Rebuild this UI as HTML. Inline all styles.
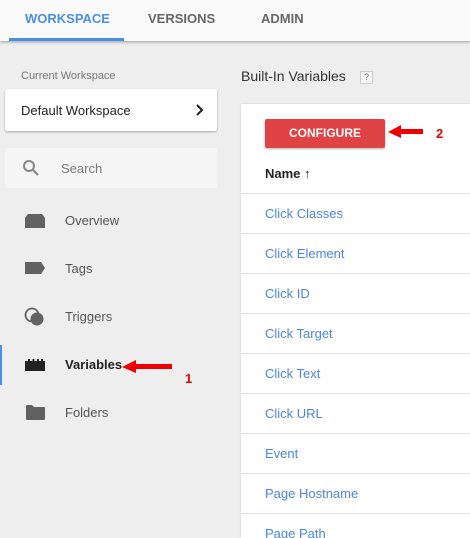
<!DOCTYPE html>
<html><head><style>
*{margin:0;padding:0;box-sizing:border-box}
html,body{width:470px;height:538px;overflow:hidden}
body{background:#eeeeee;font-family:"Liberation Sans",sans-serif;position:relative}
.hdr{position:absolute;left:0;top:0;width:470px;height:41px;background:#fafafa;box-shadow:0 1px 3px rgba(0,0,0,.35);z-index:2}
.tab{position:absolute;top:11px;font-size:13px;color:#666;font-weight:bold}
.ul{position:absolute;left:9px;top:38px;width:115px;height:3px;background:#4a90e2}
.a{position:absolute}
.nav{position:absolute;left:65px;font-size:13px;color:#555}
.panel{position:absolute;left:241px;top:104px;width:229px;height:434px;background:#fff;box-shadow:0 0 2px rgba(0,0,0,.15);overflow:hidden}
.row{position:absolute;left:0;width:229px;height:40px;border-top:1px solid #e0e0e0}
.row span{position:absolute;left:24px;top:12px;font-size:13px;color:#4a86e0}
</style></head><body>
<div class="hdr">
<div class="tab" style="left:25px;color:#4a90e2">WORKSPACE</div>
<div class="tab" style="left:148px">VERSIONS</div>
<div class="tab" style="left:261px">ADMIN</div>
<div class="ul"></div>
</div>
<div class="a" style="left:21px;top:70px;font-size:11px;color:#777">Current Workspace</div>
<div class="a" style="left:5px;top:89px;width:212px;height:42px;background:#fff;border-radius:2px;box-shadow:0 1px 2px rgba(0,0,0,.3)">
<div class="a" style="left:16px;top:14px;font-size:13px;color:#222">Default Workspace</div>
<svg class="a" style="left:190px;top:15px" width="10" height="12" viewBox="0 0 10 12"><path d="M2 1l5 5-5 5" stroke="#222" stroke-width="2" fill="none"/></svg>
</div>
<div class="a" style="left:5px;top:148px;width:212px;height:40px;background:#f5f5f5;border-radius:2px">
<svg class="a" style="left:17px;top:11px" width="18" height="18" viewBox="0 0 18 18"><circle cx="7" cy="7" r="5" stroke="#888" stroke-width="2" fill="none"/><path d="M11 11l5 5" stroke="#888" stroke-width="2.2"/></svg>
<div class="a" style="left:56px;top:13px;font-size:13px;color:#777">Search</div>
</div>
<svg class="a" style="left:25px;top:214px" width="20" height="14" viewBox="0 0 20 14"><path d="M3 0h14l3 4v10H0V4z" fill="#616161"/></svg>
<div class="nav" style="top:213px">Overview</div>
<svg class="a" style="left:25px;top:262px" width="20" height="12" viewBox="0 0 20 12"><path d="M0 0h16l4 6-4 6H0z" fill="#616161"/></svg>
<div class="nav" style="top:261px">Tags</div>
<svg class="a" style="left:24px;top:306px" width="22" height="22" viewBox="0 0 22 22"><circle cx="8" cy="9" r="6.5" stroke="#616161" stroke-width="1.8" fill="none"/><circle cx="13" cy="13" r="6.5" fill="#616161"/></svg>
<div class="nav" style="top:309px">Triggers</div>
<div class="a" style="left:0;top:345px;width:2px;height:40px;background:#4a90e2"></div>
<svg class="a" style="left:25px;top:359px" width="20" height="12" viewBox="0 0 20 12"><path d="M0 2h3V0h2v2h2.5V0h2v2H12V0h2v2h2V0h2v2h2v10H0z" fill="#222"/></svg>
<div class="nav" style="top:357px;color:#222;font-weight:bold">Variables</div>
<div class="nav" style="top:405px">Folders</div>
<svg class="a" style="left:26px;top:405px" width="19" height="15" viewBox="0 0 19 15"><path d="M0 1q0-1 1-1h5l2 2h10q1 0 1 1v11q0 1-1 1H1q-1 0-1-1z" fill="#616161"/></svg>
<svg class="a" style="left:120px;top:358px" width="80" height="30" viewBox="0 0 80 30"><path d="M2 9l14-7v4h36v5H16v4z" fill="#e00"/><text x="65" y="25" font-size="13" font-weight="bold" fill="#e00" font-family="Liberation Sans">1</text></svg>
<div class="a" style="left:241px;top:68px;font-size:14px;color:#333">Built-In Variables</div>
<div class="a" style="left:360px;top:71px;width:13px;height:13px;border:1px solid #ccc;background:#f5f5f5;font-size:9px;color:#666;text-align:center;line-height:11px">?</div>
<div class="panel">
<div class="a" style="left:24px;top:15px;width:120px;height:29px;background:#e04343;border-radius:2px;box-shadow:0 1px 2px rgba(0,0,0,.3);color:#fff;font-size:12px;font-weight:bold;text-align:center;line-height:29px">CONFIGURE</div>
<div class="a" style="left:24px;top:62px;font-size:13px;font-weight:bold;color:#222">Name <span style="font-weight:normal">↑</span></div>
<div class="row" style="top:89px"><span>Click Classes</span></div>
<div class="row" style="top:129px"><span>Click Element</span></div>
<div class="row" style="top:169px"><span>Click ID</span></div>
<div class="row" style="top:209px"><span>Click Target</span></div>
<div class="row" style="top:249px"><span>Click Text</span></div>
<div class="row" style="top:289px"><span>Click URL</span></div>
<div class="row" style="top:329px"><span>Event</span></div>
<div class="row" style="top:369px"><span>Page Hostname</span></div>
<div class="row" style="top:409px"><span>Page Path</span></div>
</div>
<svg class="a" style="left:386px;top:122px" width="70" height="26" viewBox="0 0 70 26"><path d="M2 10l13-7v4h22v5H15v4z" fill="#e00"/><text x="50" y="16" font-size="13" font-weight="bold" fill="#e00" font-family="Liberation Sans">2</text></svg>
</body></html>
